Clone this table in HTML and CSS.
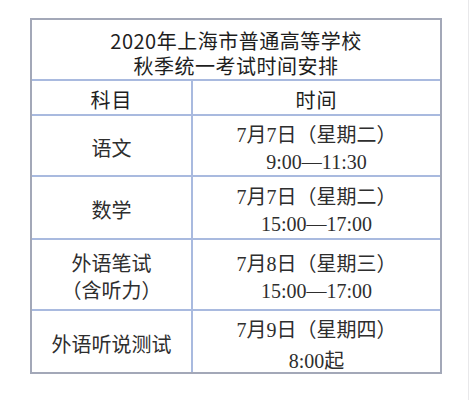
FILE: index.html
```html
<!DOCTYPE html>
<html lang="zh-CN">
<head>
<meta charset="utf-8">
<link rel="stylesheet" href="styles.css">
</head>
<body>
<div class="page">
  <div class="table">
    <div class="cell title"><span>2020年上海市普通高等学校</span><span>秋季统一考试时间安排</span></div>
    <div class="cell head">科目</div>
    <div class="cell head">时间</div>
    <div class="cell body"><span>语文</span></div>
    <div class="cell body"><span>7月7日（星期二）</span><span>9:00—11:30</span></div>
    <div class="cell body"><span>数学</span></div>
    <div class="cell body"><span>7月7日（星期二）</span><span>15:00—17:00</span></div>
    <div class="cell body"><span>外语笔试</span><span>（含听力）</span></div>
    <div class="cell body"><span>7月8日（星期三）</span><span>15:00—17:00</span></div>
    <div class="cell body"><span>外语听说测试</span></div>
    <div class="cell body last"><span>7月9日（星期四）</span><span>8:00起</span></div>
  </div>
</div>
</body>
</html>
```
FILE: styles.css
```css
html, body {
  margin: 0;
  padding: 0;
  background: #ffffff;
}
.page {
  width: 469px;
  height: 400px;
  border-right: 1px solid #e8e8ea;
  padding: 18px 0 0 30px;
  box-sizing: border-box;
}
.table {
  display: grid;
  width: 412px;
  box-sizing: border-box;
  border: 2px solid #a3a8b8;
  background: #a9badf;
  grid-template-columns: 159px 247px;
  grid-template-rows: 59px 33px 59px 61px 69px 61px;
  column-gap: 2px;
  row-gap: 2px;
}
.cell {
  background: #ffffff;
  display: flex;
  flex-direction: column;
  align-items: center;
  justify-content: center;
  color: #1e1e1e;
}
.title {
  grid-column: 1 / 3;
  font-family: "Noto Sans CJK SC", "Noto Sans", sans-serif;
  font-size: 20px;
  line-height: 25px;
  letter-spacing: 0.5px;
  padding-top: 6px;
  box-sizing: border-box;
}
.head {
  font-family: "Noto Sans CJK SC", "Noto Sans", sans-serif;
  font-size: 20px;
  line-height: 24px;
  letter-spacing: 1px;
  padding-top: 5px;
  box-sizing: border-box;
}
.body {
  font-family: "Liberation Serif", "Noto Sans CJK SC", serif;
  font-size: 20px;
  line-height: 27px;
  padding-top: 7px;
  box-sizing: border-box;
  color: #2e2e2e;
}
.body.last {
  line-height: 31px;
  padding-top: 9px;
}
```
